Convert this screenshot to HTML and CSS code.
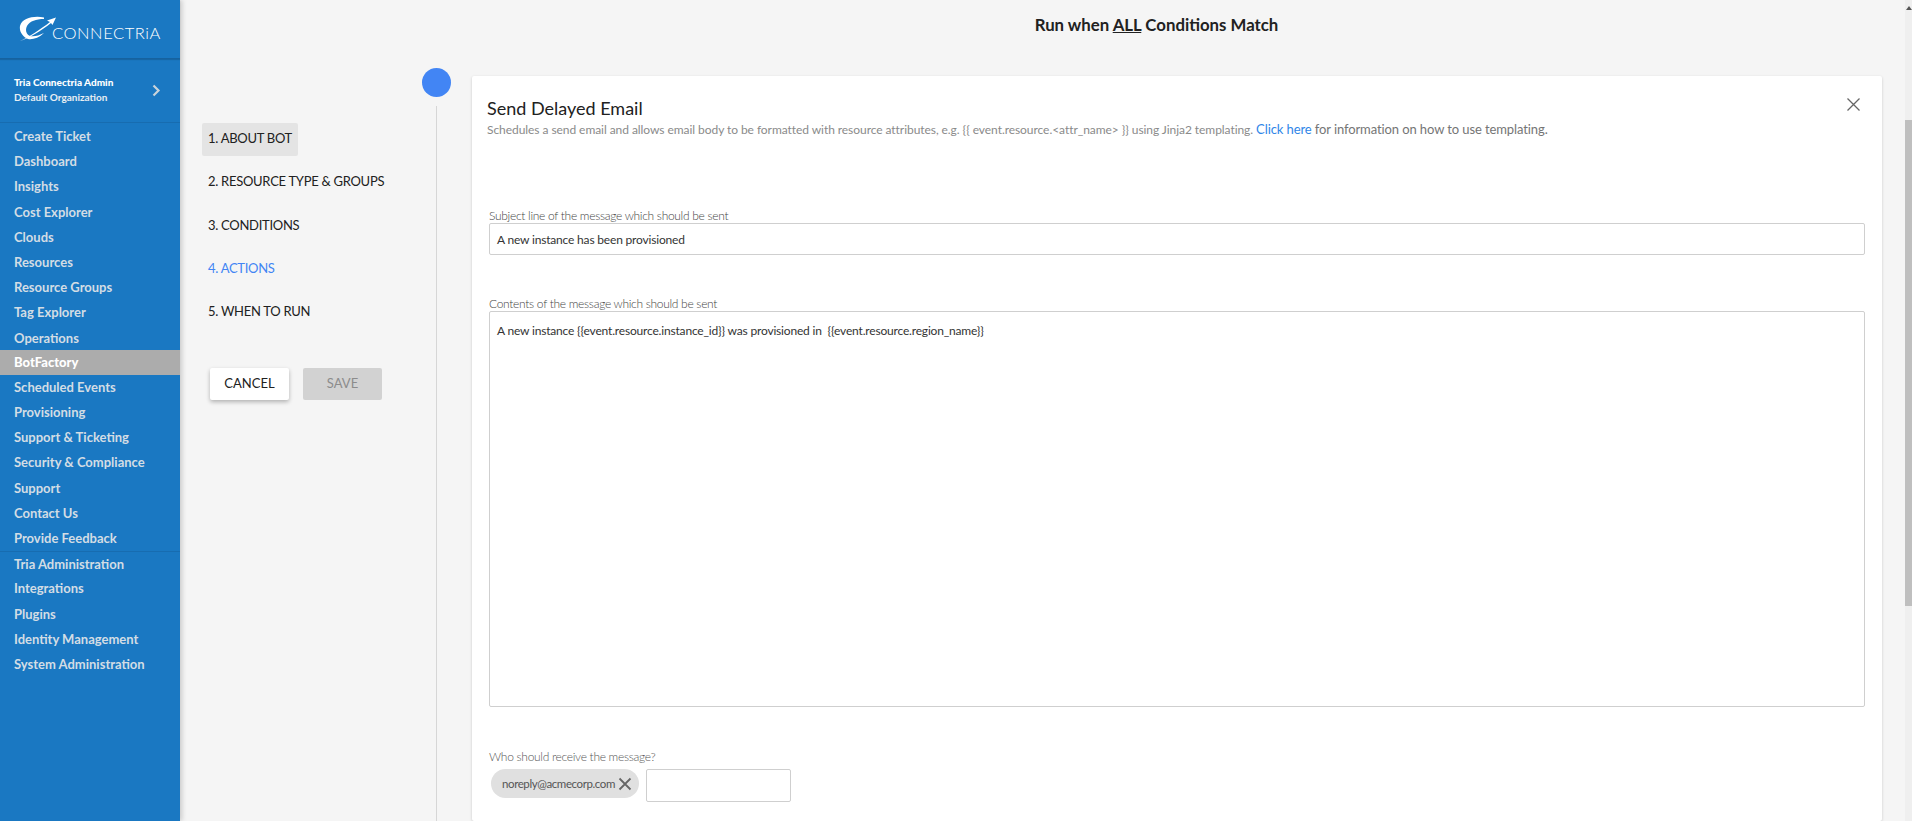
FILE: index.html
```html
<!DOCTYPE html>
<html lang="en">
<head>
<meta charset="utf-8">
<title>BotFactory</title>
<link rel="stylesheet" href="styles.css">
</head>
<body>
<aside class="sidebar">
  <div class="brand">
    <svg class="brand-mark" width="38" height="26" viewBox="0 0 38 26" aria-hidden="true">
      <path d="M25 1.500C15 -.5 3 2 1 10 0 16 4 21 9 23 13 24 20 22 25 17 20 19.500 15 21 11 20 7 18 6 14 8 10 11 5 17 3 25 3Z" fill="#fff"/>
      <path d="M0 25.500C10 21 22 13 31 6L28 4.500 37 1.500 33.500 9 32 7C22 15 10 22 0 25.500Z" fill="#fff"/>
    </svg>
    <span class="brand-name">CONNECTRiA</span>
  </div>
  <div class="account">
    <div class="account-text">
      <div class="account-name">Tria Connectria Admin</div>
      <div class="account-org">Default Organization</div>
    </div>
    <svg class="account-arrow" width="9" height="13" viewBox="0 0 9 13" aria-hidden="true"><path d="M1.500 1.500 6.500 6.500 1.500 11.500" fill="none" stroke="#c9d3da" stroke-width="2.200"/></svg>
  </div>
  <nav class="nav">
    <a class="nav-item">Create Ticket</a>
    <a class="nav-item">Dashboard</a>
    <a class="nav-item">Insights</a>
    <a class="nav-item">Cost Explorer</a>
    <a class="nav-item">Clouds</a>
    <a class="nav-item">Resources</a>
    <a class="nav-item">Resource Groups</a>
    <a class="nav-item">Tag Explorer</a>
    <a class="nav-item">Operations</a>
    <a class="nav-item active">BotFactory</a>
    <a class="nav-item">Scheduled Events</a>
    <a class="nav-item">Provisioning</a>
    <a class="nav-item">Support &amp; Ticketing</a>
    <a class="nav-item">Security &amp; Compliance</a>
    <a class="nav-item">Support</a>
    <a class="nav-item">Contact Us</a>
    <a class="nav-item">Provide Feedback</a>
    <a class="nav-item divided">Tria Administration</a>
    <a class="nav-item">Integrations</a>
    <a class="nav-item">Plugins</a>
    <a class="nav-item">Identity Management</a>
    <a class="nav-item">System Administration</a>
  </nav>
</aside>

<main class="main">
  <h1 class="run-title">Run when <u>ALL</u> Conditions Match</h1>
  <div class="workspace">
    <section class="steps">
      <ol class="step-list">
        <li class="step current">1. ABOUT BOT</li>
        <li class="step">2. RESOURCE TYPE &amp; GROUPS</li>
        <li class="step">3. CONDITIONS</li>
        <li class="step selected">4. ACTIONS</li>
        <li class="step">5. WHEN TO RUN</li>
      </ol>
      <div class="step-buttons">
        <button class="btn btn-cancel">CANCEL</button>
        <button class="btn btn-save">SAVE</button>
      </div>
    </section>
    <div class="rail">
      <span class="rail-dot"></span>
      <span class="rail-line"></span>
    </div>
    <section class="card">
      <header class="card-head">
        <h2 class="card-title">Send Delayed Email</h2>
        <svg class="card-close" width="15" height="15" viewBox="0 0 15 15" aria-hidden="true"><path d="M1.500 1.500 13.500 13.500M13.500 1.500 1.500 13.500" fill="none" stroke="#666" stroke-width="1.300"/></svg>
      </header>
      <p class="card-desc">Schedules a send email and allows email body to be formatted with resource attributes, e.g. {{ event.resource.&lt;attr_name&gt; }} using Jinja2 templating. <span class="desc-more"><a class="link">Click here</a> for information on how to use templating.</span></p>

      <label class="field-label label-subject">Subject line of the message which should be sent</label>
      <div class="input-box">A new instance has been provisioned</div>

      <label class="field-label label-contents">Contents of the message which should be sent</label>
      <div class="text-box">A new instance {{event.resource.instance_id}} was provisioned in&nbsp; {{event.resource.region_name}}</div>

      <label class="field-label label-recipient">Who should receive the message?</label>
      <div class="recipients">
        <span class="chip">noreply@acmecorp.com
          <svg class="chip-x" width="14" height="14" viewBox="0 0 14 14" aria-hidden="true"><path d="M1.500 1.500 12.500 12.500M12.500 1.500 1.500 12.500" fill="none" stroke="#666" stroke-width="1.800"/></svg>
        </span>
        <span class="recipient-input"></span>
      </div>
    </section>
  </div>
</main>

<div class="scrollbar">
  <span class="scroll-arrow"></span>
  <span class="scroll-thumb"></span>
</div>
</body>
</html>
```

FILE: styles.css
```css
* { box-sizing: border-box; }
html, body { height: 100%; }
body {
  margin: 0;
  display: flex;
  height: 821px;
  overflow: hidden;
  background: #f5f5f5;
  color: #212121;
  font-family: Lato, "Open Sans", sans-serif;
}

/* Sidebar */
.sidebar {
  width: 180px;
  flex: none;
  background: #1a78c2;
  box-shadow: 2px 0 5px rgba(0, 0, 0, .18);
  position: relative;
  z-index: 1;
}
.brand {
  height: 59px;
  display: flex;
  align-items: flex-start;
  padding: 16px 0 0 19px;
  border-bottom: 1px solid #16629f;
  box-shadow: 0 1px 1px rgba(0, 0, 0, .15);
}
.brand-name {
  margin: 9px 0 0 -5px;
  color: #fff;
  font-size: 16.500px;
  font-weight: 300;
  line-height: 16px;
  letter-spacing: .55px;
}
.account {
  height: 64px;
  display: flex;
  align-items: center;
  justify-content: space-between;
  padding: 0 14px 2px 14px;
  border-bottom: 1px solid #176cb0;
  color: #fff;
  font-size: 10px;
  line-height: 15px;
}
.account-name { font-weight: 900; }
.account-org { font-weight: 700; color: #e8eef3; }
.account-arrow { margin-top: 2px; margin-right: 5px; }
.nav {
  display: flex;
  flex-direction: column;
  padding-top: 1px;
}
.nav-item {
  height: 25.200px;
  line-height: 25px;
  padding-left: 14px;
  font-size: 13px;
  font-weight: 700;
  color: #d3dde5;
  white-space: nowrap;
}
.nav-item.active {
  margin-top: -1px;
  background: #acacac;
  color: #fff;
  font-weight: 900;
}
.nav-item.divided { border-top: 1px solid #176cb0; }

/* Main */
.main {
  flex: 1;
  min-width: 0;
  display: flex;
  flex-direction: column;
}
.run-title {
  height: 68px;
  margin: 0;
  padding: 15px 0 0 228px;
  text-align: center;
  font-size: 16.800px;
  font-weight: 700;
  line-height: 20px;
  color: #212121;
}
.workspace {
  flex: 1;
  display: flex;
  min-height: 0;
}

/* Steps */
.steps {
  width: 221px;
  flex: none;
  padding: 55px 0 0 22px;
}
.step-list {
  list-style: none;
  margin: 0;
  padding: 0;
}
.step {
  height: 33px;
  margin-bottom: 10.300px;
  padding: 0 6px;
  width: max-content;
  line-height: 30px;
  font-size: 13px;
  letter-spacing: -.28px;
  color: #212121;
  border-radius: 2px;
}
.step.current { background: #e4e4e4; }
.step.selected { color: #4285f4; }
.step-buttons {
  display: flex;
  gap: 14px;
  margin: 38.500px 0 0 8px;
}
.btn {
  width: 79px;
  height: 32px;
  padding: 0 0 2px;
  border: 0;
  border-radius: 2px;
  font-family: inherit;
  font-size: 13px;
}
.btn-cancel {
  background: #fff;
  color: #212121;
  box-shadow: 0 2px 4px rgba(0, 0, 0, .28);
}
.btn-save {
  background: #d2d2d2;
  color: #8c8c8c;
}

/* Rail */
.rail {
  width: 71px;
  flex: none;
  display: flex;
  flex-direction: column;
  align-items: center;
}
.rail-dot {
  width: 29px;
  height: 29px;
  border-radius: 50%;
  background: #4285f4;
  flex: none;
}
.rail-line {
  width: 1px;
  flex: 1;
  margin-top: 9px;
  background: #d6d6d6;
}

/* Card */
.card {
  width: 1410px;
  margin: 8px 0 0 0;
  padding: 20px 17px 0 15px;
  background: #fff;
  border-radius: 2px;
  box-shadow: 0 1px 3px rgba(0, 0, 0, .18);
  height: 745px;
}
.card-head {
  display: flex;
  justify-content: space-between;
  align-items: flex-start;
}
.card-title {
  margin: 0;
  font-size: 18px;
  font-weight: 400;
  line-height: 24px;
  color: #212121;
}
.card-close { margin: 1px 4px 0 0; }
.card-desc {
  margin: 0;
  font-size: 12px;
  letter-spacing: -.06px;
  line-height: 18px;
  color: #8a8a8a;
  white-space: nowrap;
}
.desc-more { font-size: 13px; letter-spacing: -.1px; color: #757575; }
.link { color: #2f86e8; }
.field-label {
  display: block;
  margin-left: 2px;
  font-size: 12px;
  font-weight: 300;
  letter-spacing: -.3px;
  line-height: 14px;
  color: #444;
}
.label-subject { margin-top: 70px; }
.label-contents { margin-top: 42px; }
.label-recipient { margin-top: 43px; color: #555; }
.input-box,
.text-box {
  margin-left: 2px;
  border: 1px solid #cfcfcf;
  border-radius: 2px;
  font-size: 12px;
  letter-spacing: -.18px;
  color: #333;
  padding-left: 7px;
}
.input-box {
  height: 32px;
  line-height: 31px;
}
.text-box {
  height: 396px;
  padding-top: 11px;
  line-height: 16px;
}
.recipients {
  display: flex;
  align-items: flex-start;
  gap: 7px;
  margin: 5px 0 0 4px;
}
.chip {
  width: 148px;
  height: 29px;
  display: flex;
  align-items: center;
  justify-content: space-between;
  padding: 0 7px 0 11px;
  border-radius: 15px;
  background: #e0e0e0;
  font-size: 11.500px;
  letter-spacing: -.4px;
  color: #555;
}
.chip-x { flex: none; }
.recipient-input {
  width: 145px;
  height: 33px;
  border: 1px solid #cfcfcf;
  border-radius: 2px;
  background: #fff;
}

/* Scrollbar */
.scrollbar {
  width: 7px;
  flex: none;
  background: #efefef;
  position: relative;
}
.scroll-arrow {
  position: absolute;
  top: 6px;
  left: 1px;
  border-left: 3px solid transparent;
  border-right: 3px solid transparent;
  border-bottom: 4px solid #555;
}
.scroll-thumb {
  position: absolute;
  top: 120px;
  left: 0;
  right: 0;
  height: 486px;
  background: #bfbfbf;
}
```
